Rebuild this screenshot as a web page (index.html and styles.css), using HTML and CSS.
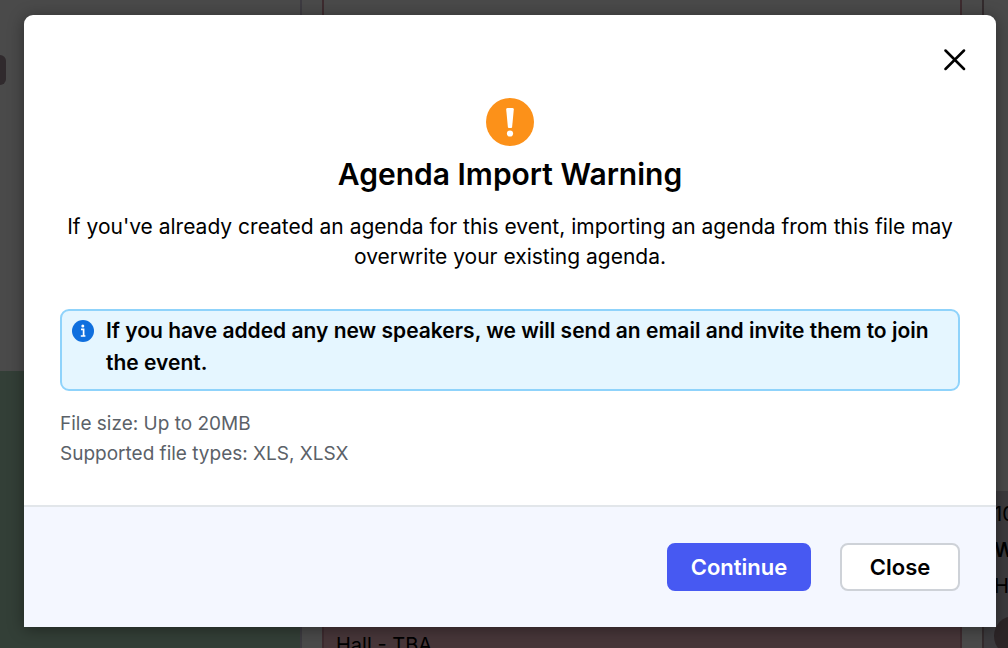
FILE: index.html
```html
<!DOCTYPE html>
<html lang="en">

<head>
	<meta charset="utf-8" />
	<meta name="viewport" content="width=device-width, initial-scale=1" />
	<title>Agenda Import Warning</title>
	<link rel="stylesheet" href="styles.css">
</head>

<body>
	<div class="agenda" aria-hidden="true">
		<div class="track">
			<div class="slot slot-first"><span class="handle"></span></div>
			<div class="session session-green"></div>
		</div>
		<div class="track track-lined">
			<div class="slot slot-tall"></div>
			<div class="session session-red">Hall - TBA</div>
		</div>
		<div class="track track-last">
			<div class="slot slot-mid"></div>
			<div class="session session-gray">
				<p>10</p>
				<p class="strong">W</p>
				<p>H</p>
				<span class="avatar"></span>
			</div>
		</div>
	</div>

	<div class="overlay">
		<section class="modal" role="dialog" aria-modal="true" aria-labelledby="modal-title">
			<div class="modal-body">
				<button type="button" class="dismiss" aria-label="Dismiss">
					<svg width="22" height="22" viewBox="0 0 22 22"><path d="M1.500 1.500l18.500 18.500M20 1.500l-18.500 18.500" fill="none" stroke="#000" stroke-width="2.500" stroke-linecap="round" /></svg>
				</button>
				<svg class="warning-icon" width="48" height="48" viewBox="0 0 48 48">
					<circle cx="24" cy="24" r="24" fill="#fc9119" />
					<path d="M20.200 11.600Q20.100 10 21.600 10h4.800Q27.900 10 27.800 11.600L26.100 29.200Q26 30 25.200 30h-2.400Q22 30 21.900 29.200z" fill="#fff" />
					<circle cx="24" cy="35.500" r="3.100" fill="#fff" />
				</svg>
				<h1 class="modal-title" id="modal-title">Agenda Import Warning</h1>
				<p class="message">If you've already created an agenda for this event, importing an agenda from this file may overwrite your existing agenda.</p>
				<div class="note">
					<svg class="note-icon" width="22" height="22" viewBox="0 0 22 22">
						<circle cx="11" cy="11" r="11" fill="#0f6fde" />
						<circle cx="10.800" cy="6" r="1.500" fill="#fff" />
						<path d="M9 9.400h2.600v6.400M8.800 16h4.600" fill="none" stroke="#fff" stroke-width="1.700" />
					</svg>
					<p class="note-text">If you have added any new speakers, we will send an email and invite them to join the event.</p>
				</div>
				<p class="file-info">File size: Up to 20MB</p>
				<p class="file-info">Supported file types: XLS, XLSX</p>
			</div>
			<div class="modal-footer">
				<button type="button" class="btn btn-primary">Continue</button>
				<button type="button" class="btn">Close</button>
			</div>
		</section>
	</div>
</body>

</html>
```
FILE: styles.css
```css
* {
	box-sizing: border-box;
}

body {
	margin: 0;
	height: 100vh;
	overflow: hidden;
	position: relative;
	background: #4a4a4a;
	color: #000;
	font-family: Inter, "Liberation Sans", sans-serif;
}

h1, p {
	margin: 0;
}

/* dimmed agenda behind the modal */
.agenda {
	display: grid;
	grid-template-columns: 302px 1fr 26px;
	gap: 20px;
	height: 100%;
}

.track {
	display: flex;
	flex-direction: column;
	overflow: hidden;
	border-right: 2px solid #3d3b41;
}

.track-lined {
	border-left: 2px solid #3d2b2f;
	border-right-color: #3d2b2f;
}

.track-last {
	border-left: 2px solid #332b2d;
	border-right: 0;
}

.slot {
	flex: none;
	background: #4a4a4a;
}

.slot-first {
	height: 371px;
	padding-top: 55px;
}

.slot-mid {
	height: 491px;
}

.slot-tall {
	height: 627px;
}

.handle {
	display: block;
	width: 6px;
	height: 30px;
	border-radius: 0 6px 6px 0;
	background: #302a2d;
}

.session {
	flex: 1;
	font-size: 20px;
}

.session-green {
	background: #333f37;
}

.session-red {
	padding: 6px 12px;
	background: #473639;
}

.session-gray {
	padding: 5px 10px;
	background: #3c3b3e;
	line-height: 36px;
}

.strong {
	font-weight: 600;
}

.avatar {
	display: block;
	width: 40px;
	height: 40px;
	margin-top: 12px;
	border-radius: 50%;
	background: #2c2527;
}

.overlay {
	position: absolute;
	inset: 0;
	padding: 15px 12px 20px 24px;
}

.modal {
	border-radius: 9px 9px 0 0;
	background: #fff;
	box-shadow: 0 2px 16px rgba(0, 0, 0, 0.4);
}

.modal-body {
	display: flex;
	flex-direction: column;
	padding: 28px 36px 36px;
}

.dismiss {
	display: flex;
	align-self: flex-end;
	margin-right: -12px;
	padding: 6px;
	border: 0;
	background: none;
	cursor: pointer;
}

.warning-icon {
	align-self: center;
	margin-top: 21px;
}

.modal-title {
	margin-top: 10px;
	font-size: 30px;
	font-weight: 600;
	line-height: 36px;
	text-align: center;
}

.message {
	margin-top: 20px;
	font-size: 21px;
	line-height: 30px;
	text-align: center;
}

.note {
	display: flex;
	gap: 12px;
	margin: 37px 0 18px;
	padding: 4px 10px 10px;
	border: 2px solid #8fd3fb;
	border-radius: 9px;
	background: #e5f6ff;
}

.note-icon {
	flex: none;
	margin-top: 5px;
}

.note-text {
	font-size: 21px;
	font-weight: 600;
	line-height: 32px;
}

.file-info {
	color: #5b6168;
	font-size: 19px;
	line-height: 30px;
}

.modal-footer {
	display: flex;
	justify-content: flex-end;
	gap: 29px;
	padding: 36px;
	border-top: 2px solid #e2e6ea;
	background: #f4f7ff;
}

.btn {
	min-width: 120px;
	height: 48px;
	padding: 0 20px;
	border: 2px solid #ced2d8;
	border-radius: 8px;
	background: #fff;
	color: #000;
	font-family: inherit;
	font-size: 22px;
	font-weight: 600;
	cursor: pointer;
}

.btn-primary {
	min-width: 144px;
	border-color: #4759f2;
	background: #4759f2;
	color: #fff;
}
```
